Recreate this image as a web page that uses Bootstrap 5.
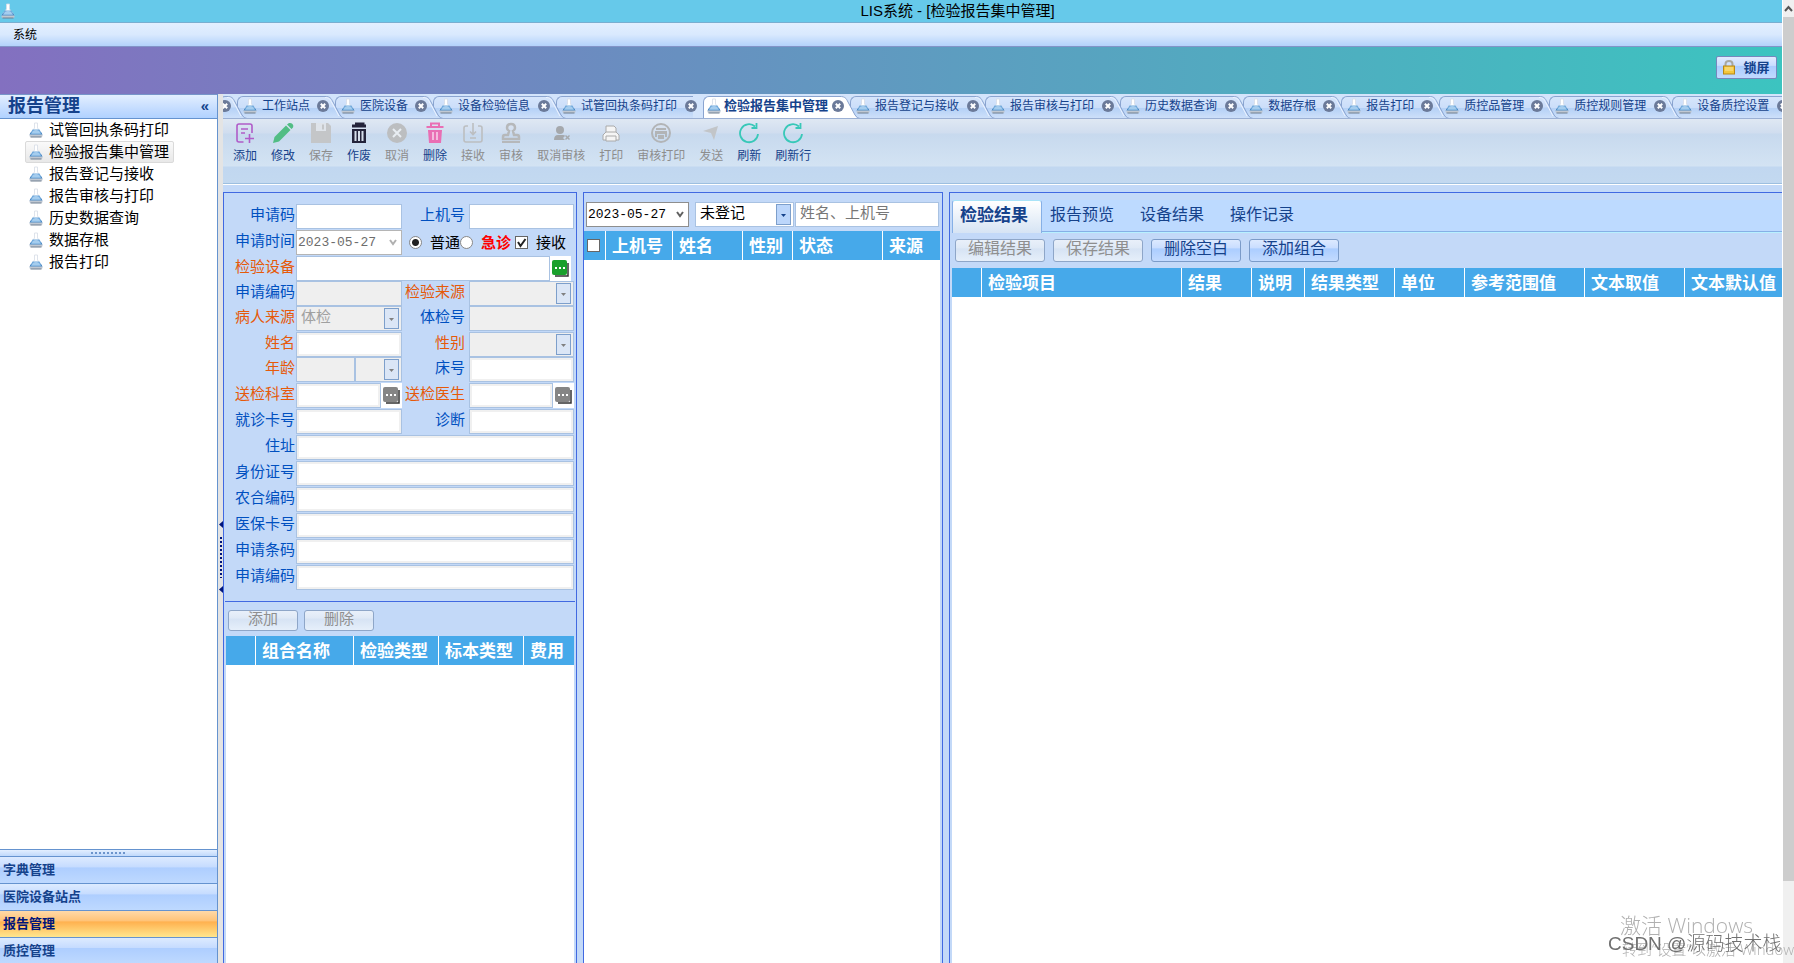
<!DOCTYPE html>
<html lang="zh-CN">
<head>
<meta charset="utf-8">
<meta name="viewport" content="width=device-width, initial-scale=1">
<title>LIS系统 - [检验报告集中管理]</title>
<link href="https://cdn.jsdelivr.net/npm/bootstrap@5.3.0/dist/css/bootstrap.min.css" rel="stylesheet">
<style>
:root{--navy:#15428b;--label:#0050c0;--must:#e65a0a;--head:#46a9ea;--pane:#c3d9f8;--edge:#4169e1;--field:#a9c2e2}
html,body{height:100%}
body{font-family:"Liberation Sans","Noto Sans CJK SC",sans-serif;font-size:15px;line-height:20px;color:#000;background:#fff;overflow:hidden}
button,input,select{font:inherit}
.app-window{min-width:0;border-right:1px solid #fff}
.title-strip{height:23px;background:#66c9ea;border-bottom:1px solid #79aed0;padding-left:1px}
.title-text{padding-left:118px}
.menu-strip{height:24px;background:linear-gradient(#e3efff,#d9e9fe 50%,#b3d2fb);border-bottom:1px solid #8294c8;padding-left:13px;font-size:12px}
.menu-strip a{color:#000;text-decoration:none}
.banner{height:47px;background:linear-gradient(90deg,#8370c0,#3cc4c0);padding:0 5px 6px 0}
.lock-btn{height:23px;width:61px;padding:0;border:1px solid #7787bd;border-radius:2px;background:linear-gradient(#e0ebff,#c9ddff 40%,#abcdff 45%,#c1daff);color:var(--navy);font-size:13px;font-weight:700;line-height:16px}
.scroll-rail{width:11px;background:#f0f0f0}
.scroll-up{height:17px}
.scroll-thumb{background:#cdcdcd;margin-bottom:82px}
/* sidebar */
.side{width:218px;border-right:1px solid #6593cf;background:#fff;overflow:hidden}
.side-head{height:25px;background:linear-gradient(#e3efff,#c4dcff 60%,#b0d2ff);border-bottom:1px solid #6593cf;border-top:1px solid #7795c9;color:var(--navy);padding:0 8px 2px;font-size:18px;font-weight:700}
.side-head button{border:0;background:none;color:var(--navy);padding:0;font-size:15px;line-height:20px}
.tree{padding-left:25px}
.tree a{height:22px;padding:0 4px 0 3px;color:#000;text-decoration:none;border:1px solid transparent;width:max-content;gap:6px}
.tree a.chosen{background:linear-gradient(#fafafa,#e8e8e8);border-color:#dadada;border-radius:2px}
.grip{height:8px;background:linear-gradient(#e3efff,#c0d9fb);border-top:1px solid #6593cf;border-bottom:1px solid #6593cf}
.grip i{width:36px;height:2px;background:repeating-linear-gradient(90deg,#6d95cc 0 2px,transparent 2px 4px)}
.group-btn{height:27px;border:0;border-bottom:1px solid #6593cf;background:linear-gradient(#ddebff,#c6dcff 38%,#aeceff 42%,#bed9ff);color:var(--navy);font-size:13px;font-weight:700;text-align:left;padding:0 3px}
.group-btn:last-child{height:25px;border-bottom:0}
.group-btn.lit{background:linear-gradient(#ffd9a8,#ffc377 38%,#ffb14f 42%,#ffe68e);color:#00157a}
.split-bar{width:5px;background:#e4e4e4;color:#00157a;padding-top:56px}
.split-bar i{width:4px;height:42px;background:radial-gradient(circle,#00157a 1px,transparent 1px) 0 0/4px 4px}
/* document tabs */
.doc-strip{height:25px;background:#d3e4fb;border-bottom:1px solid #9bb0d4;padding-top:2px;overflow:hidden}
.doc-tab{position:relative;height:23px;flex:none;padding:0 6px 3px;color:var(--navy);font-size:12px;line-height:20px;text-decoration:none}
.doc-tab:hover{color:var(--navy)}
.doc-tab::before{content:"";position:absolute;left:0;right:10px;top:0;bottom:0;border:1px solid #8aa4d0;border-width:1px 0 0 1px;border-top-left-radius:6px;background:linear-gradient(#d6e5fb,#cbdefa 48%,#b5d1f6 52%,#cfe1fa)}
.doc-tab>*{position:relative;z-index:2}
.doc-tab .slant{position:absolute;right:-10px;top:0;z-index:1}
.doc-tab .cap{margin:0 7px 0 5px}
.doc-tab .cap.wide{margin-right:8px}
.doc-tab.now{padding-left:4px;font-size:13px;font-weight:700;z-index:3}
.doc-tab.now::before{background:#fff}
.doc-tab.now .cap{margin:0 4px 0 3px}
.doc-tab.cut{margin-left:-4px;padding-left:0}
/* ribbon */
.ribbon{height:66px;background:linear-gradient(#dfe8f3,#d0ddef 14px,#c7d9ee 15px,#d3e3f3 47px,#c1d7f0 48px,#c3d9f0);border-bottom:1px solid #fff;box-shadow:inset 0 -1px #9dbfe0;padding:2px 3px 0}
.tool{border:0;background:none;padding:0 7px;height:44px;font-size:12px;line-height:18px;color:var(--navy)}
.tool svg{display:block;margin:1px auto 3px}
.tool:disabled{color:#8d8d8d}
/* panes */
.work{padding-top:7px;gap:6px;background:var(--pane)}
.pane{border:1px solid var(--edge);border-bottom:0;background:var(--pane)}
.pane-form{width:354px}
.pane-queue{width:360px}
.pane-result{border-right:0;min-width:0}
.entry{padding:11px 1px 11px 0;border-bottom:1px solid var(--edge);margin:0 1px}
.line{display:grid;grid-template-columns:71px 106px 67px minmax(0,1fr);height:25px;margin-bottom:1px;align-items:stretch}
.line.tight{margin-bottom:0}
.line label{color:var(--label);text-align:right;padding:1px 1px 0 0;white-space:nowrap}
.line label.must{color:var(--must)}
.line label+*+label{padding-right:4px}
.line .span3{grid-column:span 3}
.field{border:1px solid var(--field);background-color:#fff;border-radius:0;padding:0 4px;width:100%;min-width:0;height:25px;display:block;color:#000;font-size:15px;line-height:18px;appearance:none}
.field:disabled,.field.off{background-color:#efefef;color:#a0a0a0;opacity:1}
.field.inset-line{box-shadow:inset 0 0 0 2px #f0f0f0}
.field.age{flex:0 0 59px}
.field.pick{padding:0 18px 3px 4px;background-repeat:no-repeat;background-position:right 2px center;background-image:url("data:image/svg+xml,%3Csvg xmlns='http://www.w3.org/2000/svg' width='15' height='21'%3E%3Crect x='.5' y='.5' width='14' height='20' fill='%23dbe6f6' stroke='%237d9fcb'/%3E%3Cpath d='M5 10h5l-2.500 3z' fill='%23808080'/%3E%3C/svg%3E")}
.field.pick.live{background-image:url("data:image/svg+xml,%3Csvg xmlns='http://www.w3.org/2000/svg' width='15' height='21'%3E%3Crect x='.5' y='.5' width='14' height='20' fill='%23bcd6fb' stroke='%237d9fcb'/%3E%3Cpath d='M5 10h5l-2.500 3z' fill='%2315428b'/%3E%3C/svg%3E")}
.field.date{font-family:"Liberation Mono",monospace;font-size:13px;padding:0 16px 0 1px;border-color:#8e8e8e;background-repeat:no-repeat;background-position:right 4px center;background-image:url("data:image/svg+xml,%3Csvg xmlns='http://www.w3.org/2000/svg' width='8' height='7'%3E%3Cpath d='M1 1l3 4 3-4' fill='none' stroke='%23606060' stroke-width='2'/%3E%3C/svg%3E")}
.field.date.off{background-color:#fff;color:#6d6d6d;border-color:#b5b5b5;background-image:url("data:image/svg+xml,%3Csvg xmlns='http://www.w3.org/2000/svg' width='8' height='7'%3E%3Cpath d='M1 1l3 4 3-4' fill='none' stroke='%23b0b0b0' stroke-width='2'/%3E%3C/svg%3E")}
.field::placeholder{color:#777;opacity:1}
.more{flex:none;width:21px;height:25px;border:0;padding:0;background:#fff;color:#858585;display:flex;align-items:center;justify-content:center}
.more.go{color:#19a02b;margin-right:3px}
.line .flags{grid-column:span 2;padding-left:7px}
.line .flags label{color:#000;padding:0}
.line .flags .urgent{color:red;font-weight:700}
.mark-box{appearance:none;flex:none;width:13px;height:13px;margin:0;border:1px solid #666;background:#fff}
.mark-box[type=radio]{border-radius:50%;border-color:#888}
.mark-box[type=radio]:checked{background:radial-gradient(circle,#222 3px,#fff 4px)}
.mark-box[type=checkbox]:checked{background:#fff url("data:image/svg+xml,%3Csvg xmlns='http://www.w3.org/2000/svg' width='11' height='11'%3E%3Cpath d='M2 5l2.500 4L9.500 2' fill='none' stroke='%23222' stroke-width='2'/%3E%3C/svg%3E")}
.act{height:23px;width:90px;padding:0;border:1px solid #7b9bc8;border-radius:3px;background:linear-gradient(#dce9ff,#c9ddff 38%,#abcdff 42%,#c3dbff);color:var(--navy);font-size:16px;line-height:17px;display:flex;justify-content:center}
.act:disabled{background:linear-gradient(#e9f0fa,#dfe9f6 38%,#d6e3f4 42%,#e6effa);color:#8f8f8f;opacity:1;border-color:#8ea6c8}
.act.slim{width:70px;height:21px;font-size:15px;line-height:15px}
.combo-acts{gap:6px;padding:8px 4px 5px}
.result-acts{gap:8px;padding:6px 5px 0;height:35px}
.sheet{table-layout:fixed;width:100%;border-collapse:separate;border-spacing:0}
.sheet th{height:29px;padding:2px 6px 0;background:var(--head);color:#fff;font-size:17px;font-weight:700;line-height:26px;white-space:nowrap;overflow:hidden;border-right:1px solid #fff}
.sheet th:last-child{border-right:0}
.sheet .tick{padding:0 3px}
.sheet-wrap{margin:0 2px}
.filter{padding:9px 3px 4px 2px}
.filter .day{flex:0 0 103px}
.filter .state{flex:0 0 99px;margin:0 1px 0 6px}
.view-tabs{height:33px;background:#bddaff;border-bottom:1px solid #b8f0ff;box-shadow:inset 0 -1px #86b0e6;margin:7px 0 0 2px}
.view-tabs button{border:0;background:none;color:var(--navy);font-size:16px;text-align:left;padding:0 0 3px 8px;width:90px;height:32px}
.view-tabs button.on{font-size:17px;font-weight:700;height:33px;padding-left:7px;background:linear-gradient(#fff,#d6e4f4);border:1px solid #86b0e6;border-top-color:#a9e3f8;border-bottom:0;border-radius:3px 3px 0 0}
/* overlay notices */
.notice{position:fixed;right:0;bottom:0;width:186px;height:50px;pointer-events:none;white-space:nowrap;overflow:hidden;color:#b0b0b0;font-weight:300;font-family:"Open Sans","Noto Sans CJK SC",sans-serif}
.notice p{position:absolute;margin:0}
.notice .n1{left:12px;top:0;font-size:21px;line-height:24px}
.notice .n2{left:14px;top:26px;font-size:15px}
.notice .n3{left:0;top:20px;font-family:"Liberation Sans","Noto Sans CJK SC",sans-serif;font-size:19px;line-height:22px;color:#707070}
</style>
</head>
<body class="d-flex">
<svg class="position-absolute" width="0" height="0" aria-hidden="true">
  <linearGradient id="gTab" x1="0" y1="0" x2="0" y2="1"><stop offset="0" stop-color="#d6e5fb"/><stop offset=".48" stop-color="#cbdefa"/><stop offset=".52" stop-color="#b5d1f6"/><stop offset="1" stop-color="#cfe1fa"/></linearGradient>
  <symbol id="flask" viewBox="0 0 14 16"><path d="M5.500 1h3v5l4.500 6H1l4.500-6z" fill="#fff" stroke="#d5dce6" stroke-width=".8"/><path d="M3.500 7.500h7L13 12H1z" fill="#6fa8dc"/><path d="M4 9q3-2 6 0l1.500 2.500h-9z" fill="#a5cdee"/><path d="M2 10.500L1 12.500h12l-1-2" fill="none" stroke="#4f8cc6"/><path d="M.5 12.500h13v1q0 1.500-1.500 1.500H2Q.5 15 .5 13.500z" fill="#c0c8d2"/><path d="M1.500 15h11" stroke="#6f7e90"/></symbol>
  <symbol id="shut" viewBox="0 0 12 12"><circle cx="6" cy="6" r="6" fill="#6b7a99"/><path d="M3.800 3.800l4.400 4.400m0-4.400L3.800 8.200" stroke="#fff" stroke-width="2"/></symbol>
  <symbol id="slantBlue" viewBox="0 0 20 23"><path d="M0 0C5 0 6 2 8 6L15 19Q17 23 20 23H0z" fill="url(#gTab)"/><path d="M0 .5C5 .5 6 2 8 6L15 19Q17 22.500 20 22.500" fill="none" stroke="#8aa4d0"/><path d="M0 1.500C4 1.500 5 3 7 7L14 20" fill="none" stroke="#edf4ff"/></symbol>
  <symbol id="slantWhite" viewBox="0 0 20 23"><path d="M0 0C5 0 6 2 8 6L15 19Q17 23 20 23H0z" fill="#fff"/><path d="M0 .5C5 .5 6 2 8 6L15 19Q17 22.500 20 22.500" fill="none" stroke="#8aa4d0"/></symbol>
  <symbol id="dots" viewBox="0 0 17 17"><path d="M3 16h13V3" fill="none" stroke="#333" stroke-width="1.500"/><rect width="15" height="15" rx="2" fill="currentColor"/><path d="M3 7h2v2H3zm4 0h2v2H7zm4 0h2v2h-2z" fill="#fff"/></symbol>
</svg>

<div class="app-window flex-grow-1 d-flex flex-column vh-100">
  <header>
    <div class="title-strip d-flex align-items-center">
      <svg width="14" height="16"><use href="#flask"/></svg>
      <div class="title-text flex-grow-1 text-center">LIS系统 - [检验报告集中管理]</div>
    </div>
    <nav class="menu-strip d-flex align-items-center"><a href="#">系统</a></nav>
    <div class="banner d-flex align-items-center justify-content-end">
      <button class="lock-btn d-flex align-items-center justify-content-center gap-2">
        <svg width="12" height="15" viewBox="0 0 12 15"><path d="M2.500 7V4q0-3 3.500-3t3.500 3v3" fill="none" stroke="#a8a8a0" stroke-width="2"/><rect x=".5" y="6" width="11" height="8" fill="#f4c63c" stroke="#b88716"/><path d="M2 8h8M2 10h8" stroke="#fbe69a"/></svg>锁屏</button>
    </div>
  </header>

  <div class="d-flex flex-grow-1 overflow-hidden">
    <aside class="side d-flex flex-column flex-shrink-0">
      <div class="side-head d-flex align-items-center justify-content-between"><span>报告管理</span><button aria-label="收起">«</button></div>
      <nav class="tree flex-grow-1">
        <a href="#" class="d-flex align-items-center"><svg width="14" height="16"><use href="#flask"/></svg>试管回执条码打印</a>
        <a href="#" class="chosen d-flex align-items-center"><svg width="14" height="16"><use href="#flask"/></svg>检验报告集中管理</a>
        <a href="#" class="d-flex align-items-center"><svg width="14" height="16"><use href="#flask"/></svg>报告登记与接收</a>
        <a href="#" class="d-flex align-items-center"><svg width="14" height="16"><use href="#flask"/></svg>报告审核与打印</a>
        <a href="#" class="d-flex align-items-center"><svg width="14" height="16"><use href="#flask"/></svg>历史数据查询</a>
        <a href="#" class="d-flex align-items-center"><svg width="14" height="16"><use href="#flask"/></svg>数据存根</a>
        <a href="#" class="d-flex align-items-center"><svg width="14" height="16"><use href="#flask"/></svg>报告打印</a>
      </nav>
      <div class="grip d-flex align-items-center justify-content-center"><i></i></div>
      <button class="group-btn">字典管理</button>
      <button class="group-btn">医院设备站点</button>
      <button class="group-btn lit">报告管理</button>
      <button class="group-btn">质控管理</button>
    </aside>
    <div class="split-bar flex-shrink-0 d-flex flex-column align-items-center justify-content-center gap-2">
      <svg width="4" height="7"><path d="M4 0v7L0 3.500z" fill="currentColor"/></svg><i></i><svg width="4" height="7"><path d="M4 0v7L0 3.500z" fill="currentColor"/></svg>
    </div>

    <main class="flex-grow-1 d-flex flex-column" style="min-width:0">
      <nav class="doc-strip d-flex">
        <a href="#" class="doc-tab cut d-flex align-items-center" aria-label="关闭"><svg width="12" height="12"><use href="#shut"/></svg><svg class="slant" width="20" height="23"><use href="#slantBlue"/></svg></a>
        <a href="#" class="doc-tab d-flex align-items-center"><svg width="14" height="16"><use href="#flask"/></svg><span class="cap">工作站点</span><svg width="12" height="12"><use href="#shut"/></svg><svg class="slant" width="20" height="23"><use href="#slantBlue"/></svg></a>
        <a href="#" class="doc-tab d-flex align-items-center"><svg width="14" height="16"><use href="#flask"/></svg><span class="cap">医院设备</span><svg width="12" height="12"><use href="#shut"/></svg><svg class="slant" width="20" height="23"><use href="#slantBlue"/></svg></a>
        <a href="#" class="doc-tab d-flex align-items-center"><svg width="14" height="16"><use href="#flask"/></svg><span class="cap wide">设备检验信息</span><svg width="12" height="12"><use href="#shut"/></svg><svg class="slant" width="20" height="23"><use href="#slantBlue"/></svg></a>
        <a href="#" class="doc-tab d-flex align-items-center"><svg width="14" height="16"><use href="#flask"/></svg><span class="cap wide">试管回执条码打印</span><svg width="12" height="12"><use href="#shut"/></svg></a>
        <a href="#" class="doc-tab now d-flex align-items-center"><svg width="14" height="16"><use href="#flask"/></svg><span class="cap">检验报告集中管理</span><svg width="12" height="12"><use href="#shut"/></svg><svg class="slant" width="20" height="23"><use href="#slantWhite"/></svg></a>
        <a href="#" class="doc-tab d-flex align-items-center"><svg width="14" height="16"><use href="#flask"/></svg><span class="cap wide">报告登记与接收</span><svg width="12" height="12"><use href="#shut"/></svg><svg class="slant" width="20" height="23"><use href="#slantBlue"/></svg></a>
        <a href="#" class="doc-tab d-flex align-items-center"><svg width="14" height="16"><use href="#flask"/></svg><span class="cap wide">报告审核与打印</span><svg width="12" height="12"><use href="#shut"/></svg><svg class="slant" width="20" height="23"><use href="#slantBlue"/></svg></a>
        <a href="#" class="doc-tab d-flex align-items-center"><svg width="14" height="16"><use href="#flask"/></svg><span class="cap wide">历史数据查询</span><svg width="12" height="12"><use href="#shut"/></svg><svg class="slant" width="20" height="23"><use href="#slantBlue"/></svg></a>
        <a href="#" class="doc-tab d-flex align-items-center"><svg width="14" height="16"><use href="#flask"/></svg><span class="cap">数据存根</span><svg width="12" height="12"><use href="#shut"/></svg><svg class="slant" width="20" height="23"><use href="#slantBlue"/></svg></a>
        <a href="#" class="doc-tab d-flex align-items-center"><svg width="14" height="16"><use href="#flask"/></svg><span class="cap">报告打印</span><svg width="12" height="12"><use href="#shut"/></svg><svg class="slant" width="20" height="23"><use href="#slantBlue"/></svg></a>
        <a href="#" class="doc-tab d-flex align-items-center"><svg width="14" height="16"><use href="#flask"/></svg><span class="cap">质控品管理</span><svg width="12" height="12"><use href="#shut"/></svg><svg class="slant" width="20" height="23"><use href="#slantBlue"/></svg></a>
        <a href="#" class="doc-tab d-flex align-items-center"><svg width="14" height="16"><use href="#flask"/></svg><span class="cap wide">质控规则管理</span><svg width="12" height="12"><use href="#shut"/></svg><svg class="slant" width="20" height="23"><use href="#slantBlue"/></svg></a>
        <a href="#" class="doc-tab d-flex align-items-center"><svg width="14" height="16"><use href="#flask"/></svg><span class="cap wide">设备质控设置</span><svg width="12" height="12"><use href="#shut"/></svg></a>
      </nav>

      <div class="ribbon d-flex align-items-start">
        <button class="tool"><svg width="22" height="22" viewBox="0 0 22 22" fill="none" stroke="#b05cc8" stroke-width="1.600"><path d="M9.500 20H5q-2 0-2-2V4q0-2 2-2h11q2 0 2 2v7M7 7h7M7 11h4M15.500 12v9M11 16.500h9"/></svg>添加</button>
        <button class="tool"><svg width="22" height="22" viewBox="0 0 22 22" fill="#52bd84"><path d="M1 21l1.500-6L14 3.500l4.500 4.500L7 19.500zM15 2.500l2-1.500q2-.5 3.500 1t.5 3.500L19.500 7z"/></svg>修改</button>
        <button class="tool" disabled><svg width="22" height="22" viewBox="0 0 22 22"><path d="M1 1h17l3 3v17H1z" fill="#c4c6c8"/><path d="M6 1h10v8H6z" fill="#dfe4ea"/><path d="M12 2.500h2v5h-2z" fill="#c4c6c8"/></svg>保存</button>
        <button class="tool"><svg width="22" height="22" viewBox="0 0 22 22"><path d="M7 2h8v2M4 4h14" stroke="#23233a" stroke-width="3" fill="none"/><path d="M4 7h14v14H4z" fill="#23233a"/><path d="M7.500 9v10M11 9v10M14.500 9v10" stroke="#d5deea" stroke-width="2"/></svg>作废</button>
        <button class="tool" disabled><svg width="22" height="22" viewBox="0 0 22 22"><circle cx="11" cy="11" r="10" fill="#bcbec0"/><path d="M7 7l8 8m0-8l-8 8" stroke="#e8edf2" stroke-width="2"/></svg>取消</button>
        <button class="tool"><svg width="22" height="22" viewBox="0 0 22 22"><path d="M7 4V1.500h8V4M2.500 5h17" stroke="#e96fb4" stroke-width="2" fill="none"/><path d="M4 8h14l-1 13H5z" fill="#e96fb4"/><path d="M9 10v8M13 10v8" stroke="#f7d5ea" stroke-width="1.500"/></svg>删除</button>
        <button class="tool" disabled><svg width="22" height="22" viewBox="0 0 22 22" fill="none" stroke="#bcbec0" stroke-width="1.600"><path d="M6 4H4Q2 4 2 6v12q0 2 2 2h14q2 0 2-2V6q0-2-2-2h-2M11 1v11M8 9.500l3 3 3-3M8 16h6"/></svg>接收</button>
        <button class="tool" disabled><svg width="22" height="22" viewBox="0 0 22 22"><path d="M11 2q4 0 4 4 0 2-2 3l1 4h3q2 0 2 2v2H3v-2q0-2 2-2h3l1-4Q7 8 7 6q0-4 4-4z" fill="none" stroke="#b6b8ba" stroke-width="2.500"/><path d="M2 20h18" stroke="#b6b8ba" stroke-width="2"/></svg>审核</button>
        <button class="tool" disabled><svg width="22" height="22" viewBox="0 0 22 22" fill="#a5a8ac"><circle cx="10" cy="8" r="4"/><path d="M4 18q0-5 4-5h5q2 0 2 1l-2 2 2 2zM15 14l1-1 1.500 1.500L19 13l1 1-1.500 1.500L20 17l-1 1-1.500-1.500L16 18l-1-1 1.500-1.500z"/></svg>取消审核</button>
        <button class="tool" disabled><svg width="22" height="22" viewBox="0 0 22 22" fill="#f5f5f5" stroke="#aaa"><path d="M6 10V4h8l2 2v4M3 18v-5l3-3h10l3 3v5z"/><path d="M6 14h10v5H6z"/></svg>打印</button>
        <button class="tool" disabled><svg width="22" height="22" viewBox="0 0 22 22"><circle cx="11" cy="11" r="9" fill="none" stroke="#b2b4b6" stroke-width="2"/><path d="M6 6h10v2H6zM5 9h12v6h-2v-3H7v3H5zM8 13h6v4H8z" fill="#b2b4b6"/></svg>审核打印</button>
        <button class="tool" disabled><svg width="22" height="22" viewBox="0 0 22 22"><path d="M3 9l15-5-4 14-3-7z" fill="#c2c5c8"/></svg>发送</button>
        <button class="tool"><svg width="22" height="22" viewBox="0 0 22 22" fill="none" stroke="#38c8b8" stroke-width="1.800"><path d="M20 12a9 9 0 1 1-3-7.500M18.500 1v5h-5"/></svg>刷新</button>
        <button class="tool"><svg width="22" height="22" viewBox="0 0 22 22" fill="none" stroke="#38c8b8" stroke-width="1.800"><path d="M20 12a9 9 0 1 1-3-7.500M18.500 1v5h-5"/></svg>刷新行</button>
      </div>

      <div class="work d-flex flex-grow-1 overflow-hidden">
        <section class="pane pane-form d-flex flex-column flex-shrink-0">
          <form class="entry">
            <div class="line"><label for="f1">申请码</label><input id="f1" class="field"><label for="f2">上机号</label><input id="f2" class="field"></div>
            <div class="line"><label for="f3">申请时间</label><select id="f3" class="field date off"><option>2023-05-27</option></select>
              <div class="flags d-flex align-items-center">
                <input class="mark-box" type="radio" name="lv" id="lv1" checked><label for="lv1" class="ms-2">普通</label>
                <input class="mark-box" type="radio" name="lv" id="lv2"><label for="lv2" class="urgent ms-2 me-1">急诊</label>
                <input class="mark-box" type="checkbox" id="rc" checked><label for="rc" class="ms-2">接收</label>
              </div></div>
            <div class="line tight"><label class="must" for="f4">检验设备</label><div class="span3 d-flex"><input id="f4" class="field"><button type="button" class="more go" aria-label="选择检验设备"><svg width="17" height="17"><use href="#dots"/></svg></button></div></div>
            <div class="line tight"><label for="f5">申请编码</label><input id="f5" class="field" disabled><label class="must" for="f6">检验来源</label><select id="f6" class="field pick off"><option></option></select></div>
            <div class="line"><label class="must" for="f7">病人来源</label><select id="f7" class="field pick off"><option>体检</option></select><label for="f8">体检号</label><input id="f8" class="field" disabled></div>
            <div class="line tight"><label class="must" for="f9">姓名</label><input id="f9" class="field inset-line"><label class="must" for="f10">性别</label><select id="f10" class="field pick off"><option></option></select></div>
            <div class="line"><label class="must" for="f11">年龄</label><div class="d-flex"><input id="f11" class="field age" disabled><select class="field pick off" aria-label="年龄单位"><option></option></select></div><label for="f12">床号</label><input id="f12" class="field inset-line"></div>
            <div class="line"><label class="must" for="f13">送检科室</label><div class="d-flex"><input id="f13" class="field inset-line"><button type="button" class="more" aria-label="选择科室"><svg width="17" height="17"><use href="#dots"/></svg></button></div><label class="must" for="f14">送检医生</label><div class="d-flex"><input id="f14" class="field inset-line"><button type="button" class="more" aria-label="选择医生"><svg width="17" height="17"><use href="#dots"/></svg></button></div></div>
            <div class="line"><label for="f15">就诊卡号</label><input id="f15" class="field inset-line"><label for="f16">诊断</label><input id="f16" class="field inset-line"></div>
            <div class="line"><label for="f17">住址</label><input id="f17" class="field inset-line span3"></div>
            <div class="line"><label for="f18">身份证号</label><input id="f18" class="field inset-line span3"></div>
            <div class="line"><label for="f19">农合编码</label><input id="f19" class="field inset-line span3"></div>
            <div class="line"><label for="f20">医保卡号</label><input id="f20" class="field inset-line span3"></div>
            <div class="line"><label for="f21">申请条码</label><input id="f21" class="field inset-line span3"></div>
            <div class="line tight"><label for="f22">申请编码</label><input id="f22" class="field inset-line span3"></div>
          </form>
          <div class="combo-acts d-flex"><button class="act slim" disabled>添加</button><button class="act slim" disabled>删除</button></div>
          <div class="sheet-wrap bg-white flex-grow-1"><table class="sheet"><colgroup><col style="width:30px"><col style="width:98px"><col style="width:85px"><col style="width:85px"><col></colgroup><thead><tr><th></th><th>组合名称</th><th>检验类型</th><th>标本类型</th><th>费用</th></tr></thead></table></div>
        </section>

        <section class="pane pane-queue d-flex flex-column flex-shrink-0">
          <div class="filter d-flex">
            <select class="field date day" aria-label="日期"><option>2023-05-27</option></select>
            <select class="field pick live state" aria-label="登记状态"><option>未登记</option></select>
            <input class="field pb-1" placeholder="姓名、上机号" aria-label="姓名、上机号">
          </div>
          <div class="sheet-wrap bg-white flex-grow-1 ms-0"><table class="sheet"><colgroup><col style="width:22px"><col style="width:67px"><col style="width:70px"><col style="width:50px"><col style="width:90px"><col></colgroup><thead><tr><th class="tick"><input type="checkbox" class="mark-box d-block" aria-label="全选"></th><th>上机号</th><th>姓名</th><th>性别</th><th>状态</th><th>来源</th></tr></thead></table></div>
        </section>

        <section class="pane pane-result flex-grow-1 d-flex flex-column">
          <div class="view-tabs d-flex"><button class="on">检验结果</button><button>报告预览</button><button>设备结果</button><button>操作记录</button></div>
          <div class="result-acts d-flex"><button class="act" disabled>编辑结果</button><button class="act" disabled>保存结果</button><button class="act">删除空白</button><button class="act">添加组合</button></div>
          <div class="sheet-wrap bg-white flex-grow-1 me-0"><table class="sheet"><colgroup><col style="width:30px"><col style="width:200px"><col style="width:70px"><col style="width:53px"><col style="width:90px"><col style="width:70px"><col style="width:120px"><col style="width:100px"><col></colgroup><thead><tr><th></th><th>检验项目</th><th>结果</th><th>说明</th><th>结果类型</th><th>单位</th><th>参考范围值</th><th>文本取值</th><th>文本默认值</th></tr></thead></table></div>
        </section>
      </div>
    </main>
  </div>
</div>

<div class="scroll-rail flex-shrink-0 d-flex flex-column">
  <div class="scroll-up d-flex align-items-center justify-content-center"><svg width="9" height="7"><path d="M1 6l3.500-4L8 6" fill="none" stroke="#555" stroke-width="2"/></svg></div>
  <div class="scroll-thumb flex-grow-1"></div>
</div>

<div class="notice"><p class="n1">激活 Windows</p><p class="n2">转到“设置”以激活 Windows。</p><p class="n3">CSDN @源码技术栈</p></div>
<script src="https://cdn.jsdelivr.net/npm/bootstrap@5.3.0/dist/js/bootstrap.bundle.min.js"></script>
</body>
</html>
